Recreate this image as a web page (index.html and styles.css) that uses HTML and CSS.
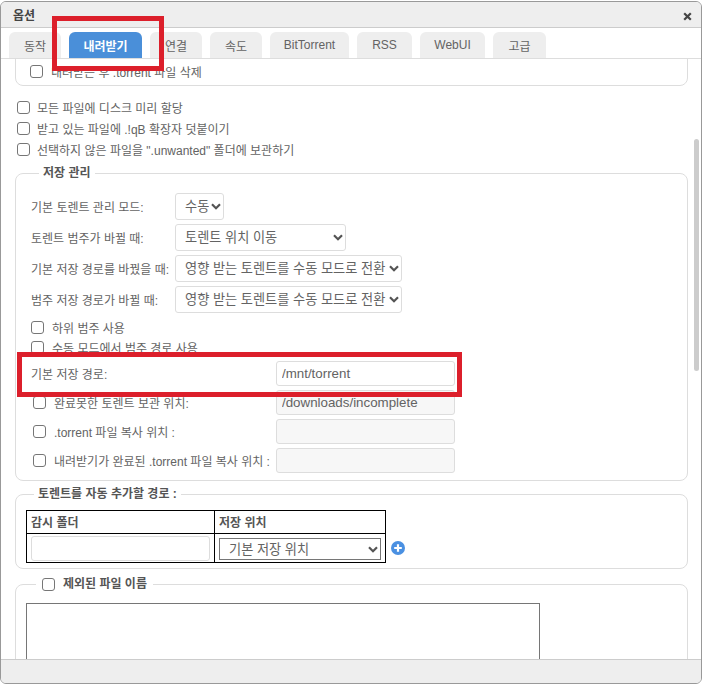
FILE: index.html
```html
<!DOCTYPE html>
<html lang="ko">
<head>
<meta charset="utf-8">
<title>옵션</title>
<link rel="stylesheet" href="styles.css">
</head>
<body>
<div class="window">
  <header class="titlebar">
    <h1 class="title">옵션</h1>
    <svg class="close" width="9" height="9" viewBox="0 0 9 9" aria-label="닫기"><path d="M1.2 1.2 7.8 7.8M7.8 1.2 1.2 7.8" stroke="#444" stroke-width="2.2" fill="none"/></svg>
  </header>
  <nav class="tabs">
    <a class="tab t1">동작</a>
    <a class="tab active">내려받기</a>
    <a class="tab t2">연결</a>
    <a class="tab t2">속도</a>
    <a class="tab t3">BitTorrent</a>
    <a class="tab t4">RSS</a>
    <a class="tab t5">WebUI</a>
    <a class="tab t6">고급</a>
  </nav>
  <main class="scroller">
    <fieldset class="box box-cut">
      <label class="check"><input type="checkbox"><span>내려받은 후 .torrent 파일 삭제</span></label>
    </fieldset>
    <div class="plain-checks">
      <label class="check"><input type="checkbox"><span>모든 파일에 디스크 미리 할당</span></label>
      <label class="check"><input type="checkbox"><span>받고 있는 파일에 .!qB 확장자 덧붙이기</span></label>
      <label class="check"><input type="checkbox"><span>선택하지 않은 파일을 ".unwanted" 폴더에 보관하기</span></label>
    </div>
    <fieldset class="box box-storage">
      <legend>저장 관리</legend>
      <div class="select-row"><span class="row-label">기본 토렌트 관리 모드:</span><select class="sel-mode"><option>수동</option></select></div>
      <div class="select-row"><span class="row-label">토렌트 범주가 바뀔 때:</span><select class="sel-mid"><option>토렌트 위치 이동</option></select></div>
      <div class="select-row"><span class="row-label">기본 저장 경로를 바꿨을 때:</span><select class="sel-wide"><option>영향 받는 토렌트를 수동 모드로 전환</option></select></div>
      <div class="select-row"><span class="row-label">범주 저장 경로가 바뀔 때:</span><select class="sel-wide"><option>영향 받는 토렌트를 수동 모드로 전환</option></select></div>
      <div class="stack-checks">
        <label class="check"><input type="checkbox"><span>하위 범주 사용</span></label>
        <label class="check"><input type="checkbox"><span>수동 모드에서 범주 경로 사용</span></label>
      </div>
      <div class="path-row first"><span class="path-label plain">기본 저장 경로:</span><input class="text" type="text" value="/mnt/torrent"></div>
      <div class="path-row"><label class="check path-label"><input type="checkbox"><span>완료못한 토렌트 보관 위치:</span></label><input class="text" type="text" value="/downloads/incomplete" disabled></div>
      <div class="path-row"><label class="check path-label"><input type="checkbox"><span>.torrent 파일 복사 위치 :</span></label><input class="text" type="text" disabled></div>
      <div class="path-row"><label class="check path-label"><input type="checkbox"><span>내려받기가 완료된 .torrent 파일 복사 위치 :</span></label><input class="text" type="text" disabled></div>
    </fieldset>
    <fieldset class="box box-watch">
      <legend>토렌트를 자동 추가할 경로 :</legend>
      <div class="watch-wrap">
        <table class="watch">
          <tr><th class="col-a">감시 폴더</th><th class="col-b">저장 위치</th></tr>
          <tr>
            <td class="cell-a"><input class="text watch-input" type="text"></td>
            <td class="cell-b"><select class="watch-select"><option>기본 저장 위치</option></select></td>
          </tr>
        </table>
        <svg class="plus" width="14" height="14" viewBox="0 0 14 14" aria-label="추가"><circle cx="7" cy="7" r="7" fill="#4a90e2"/><path d="M7 3.2v7.6M3.2 7h7.6" stroke="#fff" stroke-width="2.2"/></svg>
      </div>
    </fieldset>
    <fieldset class="box box-excl">
      <legend class="legend-check"><label class="check"><input type="checkbox"><span>제외된 파일 이름</span></label></legend>
      <textarea class="excl"></textarea>
    </fieldset>
    <div class="thumb"></div>
  </main>
  <footer class="footer"></footer>
</div>
<div class="mark mark-tab"></div>
<div class="mark mark-path"></div>
</body>
</html>
```
FILE: styles.css
```css
* { box-sizing: border-box; }
html, body { margin: 0; padding: 0; height: 684px; overflow: hidden; background: #fff; }
body {
  position: relative;
  font-family: "Liberation Sans", "Noto Sans CJK KR", sans-serif;
  font-size: 12px;
  color: #636363;
  padding-top: 1px;
}
.window {
  display: flex;
  flex-direction: column;
  height: 683px;
  border: 1px solid #999;
  border-radius: 6px;
  overflow: hidden;
  background: #fff;
}
.titlebar {
  flex: none;
  height: 26px;
  display: flex;
  align-items: center;
  justify-content: space-between;
  padding: 0 9px 0 12px;
  background: #eee;
  border-bottom: 1px solid #ccc;
}
.title { margin: 0; font-size: 12px; font-weight: bold; color: #444; }
.close { margin-top: 3px; }
.tabs {
  flex: none;
  height: 31px;
  display: flex;
  align-items: flex-end;
  gap: 8px;
  padding-left: 8px;
  border-bottom: 1px solid #ddd;
}
.tab {
  height: 26px;
  display: flex;
  align-items: center;
  justify-content: center;
  background: #eee;
  border-radius: 6px 6px 0 0;
  color: #636363;
}
.t1 { width: 52px; }
.active { width: 73px; background: #4a8fd9; color: #fff; font-weight: bold; }
.t2 { width: 52px; }
.t3 { width: 79px; }
.t4 { width: 55px; }
.t5 { width: 65px; }
.t6 { width: 53px; }
.scroller {
  flex: 1;
  min-height: 0;
  position: relative;
  overflow: hidden;
  padding: 0 14px;
}
.box {
  margin: 0;
  width: 673px;
  min-width: 0;
  border: 1px solid #ddd;
  border-radius: 8px;
  padding: 0 10px;
}
.box legend {
  margin-left: 8px;
  padding: 0 4px;
  font-weight: bold;
  line-height: 18px;
  color: #555;
}
.check {
  display: flex;
  align-items: center;
  gap: 8px;
  height: 21px;
}
.check input {
  appearance: none;
  flex: none;
  width: 13px;
  height: 13px;
  margin: 0;
  background: #fff;
  border: 1px solid #767676;
  border-radius: 3px;
}
.box-cut { margin-top: -30px; height: 57px; padding: 31px 0 0 14px; }
.plain-checks { padding: 11px 0 0 2px; }
.plain-checks .check { gap: 7px; }
.box-storage { margin-top: 4px; padding: 9px 10px 7px 15px; height: 317px; }
.select-row { display: flex; align-items: center; height: 31px; }
.row-label { width: 144px; flex: none; }
select {
  appearance: none;
  font-family: inherit;
  font-size: 13.2px;
  color: #636363;
  background: #fff url("data:image/svg+xml,%3Csvg xmlns='http://www.w3.org/2000/svg' width='10' height='7' viewBox='0 0 10 7'%3E%3Cpath d='M1 1.2 5 5.2 9 1.2' fill='none' stroke='%23555' stroke-width='2.2'/%3E%3C/svg%3E") no-repeat right 2px center;
  border: 1px solid #ddd;
  border-radius: 3px;
  height: 27px;
  padding: 0 14px 0 9px;
}
.sel-mode { width: 49px; }
.sel-mid { width: 171px; }
.sel-wide { width: 227px; }
.stack-checks { margin-top: 2px; }
.stack-checks .check { height: 20px; }
.path-row { display: flex; align-items: center; height: 29px; padding-left: 2px; }
.path-row.first { margin-top: 2px; }
.path-label { width: 243px; flex: none; }
.plain { margin-left: -2px; width: 245px; }
.text {
  width: 179px;
  height: 25px;
  padding: 0 5px;
  font-family: inherit;
  font-size: 13.33px;
  color: #636363;
  background: #fff;
  border: 1px solid #ddd;
  border-radius: 3px;
}
.text:disabled { background: #f7f7f7; }
.box-watch { margin-top: 4px; height: 84px; }
.watch-wrap { display: flex; align-items: flex-end; gap: 5px; margin-top: 7px; }
.watch { border-collapse: collapse; table-layout: fixed; width: 360px; height: 53px; }
.watch th, .watch td { border: 1px solid #000; padding: 0; }
.watch th { height: 23px; text-align: left; padding: 0 0 2px 4px; color: #555; }
.col-a { width: 188px; }
.cell-a, .cell-b { padding: 0 4px !important; }
.watch-input { display: block; width: 179px; }
.watch-select {
  display: block;
  width: 162px;
  height: 22px;
  margin-top: 2px;
  border: 1px solid #767676;
  border-radius: 0;
  padding-left: 9px;
  background-position: right 2px center;
}
.plus { margin-bottom: 8px; flex: none; }
.box-excl { margin-top: 6px; height: 200px; }
.box .legend-check { margin-left: 10px; padding: 0 6px; }
.legend-check .check { height: 18px; font-weight: bold; }
.excl {
  display: block;
  width: 514px;
  height: 150px;
  margin-top: 10px;
  border: 1px solid #767676;
  border-radius: 0;
  resize: none;
}
.thumb {
  position: absolute;
  top: 80px;
  right: 2px;
  width: 5px;
  height: 232px;
  background: #ccc;
  border-radius: 3px;
}
.footer {
  flex: none;
  height: 24px;
  background: #eee;
  border-top: 1px solid #ccc;
}
.mark { position: absolute; border: 5px solid #dc1f2b; }
.mark-tab { left: 52px; top: 16px; width: 112px; height: 55px; }
.mark-path { left: 17px; top: 352px; width: 445px; height: 45px; }
```
